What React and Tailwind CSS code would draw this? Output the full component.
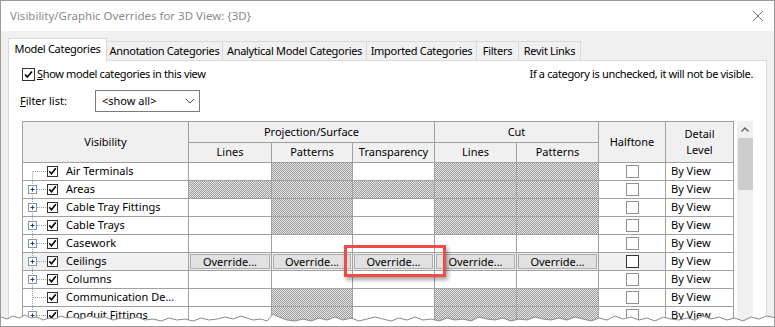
import React from "react";

const H = "h";
const W = "w";

const rows = [
  { name: "Air Terminals", plus: false, first: true, cells: [W, H, W, H, H] },
  { name: "Areas", plus: true, cells: [H, H, H, H, H] },
  { name: "Cable Tray Fittings", plus: true, cells: [W, H, W, H, H] },
  { name: "Cable Trays", plus: true, cells: [W, H, W, H, H] },
  { name: "Casework", plus: true, cells: [W, W, W, W, W] },
  { name: "Ceilings", plus: true, override: true },
  { name: "Columns", plus: true, cells: [W, W, W, W, W] },
  { name: "Communication De...", plus: false, cells: [W, H, W, H, H] },
  { name: "Conduit Fittings", plus: true, cells: [W, H, W, H, H] },
];

const tabs = [
  { label: "Annotation Categories", w: "w-[117px]" },
  { label: "Analytical Model Categories", w: "w-[145px]" },
  { label: "Imported Categories", w: "w-[111px]" },
  { label: "Filters", w: "w-[43px]" },
  { label: "Revit Links", w: "w-[63px]" },
];

const tear = [
  [0, 9], [6, 11], [12, 8], [18, 10], [24, 7], [30, 10], [36, 9], [42, 12], [48, 10], [54, 11],
  [60, 8], [66, 10], [72, 9], [80, 11], [88, 8], [96, 10], [104, 9], [112, 12], [120, 10], [128, 11],
  [136, 9], [144, 12], [152, 11], [160, 13], [168, 10], [176, 12], [184, 11], [192, 13], [200, 10],
  [208, 12], [216, 11], [224, 9], [232, 11], [240, 8], [246, 10], [252, 12], [260, 11], [266, 13],
  [272, 6], [278, 9], [286, 12], [294, 13], [302, 11], [310, 13], [318, 10], [326, 12], [334, 9],
  [342, 12], [350, 10], [358, 13], [366, 11], [374, 9], [382, 11], [390, 13], [398, 10], [406, 12],
  [414, 9], [422, 12], [430, 11], [438, 13], [446, 10], [454, 12], [462, 11], [470, 13], [478, 9],
  [486, 11], [494, 12], [502, 10], [510, 13], [518, 11], [526, 12], [534, 9], [542, 11], [550, 12],
  [558, 10], [566, 12], [574, 9], [582, 11], [590, 13], [598, 10], [606, 12], [614, 8], [622, 11],
  [630, 9], [638, 12], [646, 10], [654, 13], [662, 9], [670, 11], [678, 12], [686, 10], [694, 12],
  [702, 8], [710, 11], [718, 9], [726, 12], [734, 10], [742, 13], [750, 9], [758, 11], [766, 8], [775, 10],
];

const cell = "border-r border-b border-[#a0a0a0]";
const hatch =
  "bg-[repeating-conic-gradient(#9a9a9a_0%_25%,#e8e8e8_0%_50%)] bg-[length:2px_2px]";

function Check({ className = "" }) {
  return (
    <svg width="13" height="13" viewBox="0 0 13 13" className={className}>
      <rect x="0.5" y="0.5" width="12" height="12" fill="#fff" stroke="#333" />
      <path d="M3 6.5 L5.3 9 L10 3.5" fill="none" stroke="#000" strokeWidth="1.7" />
    </svg>
  );
}

function Tree({ plus, first }) {
  return (
    <svg width="40" height="17" viewBox="0 0 40 17" className="shrink-0">
      <path
        d={first ? "M9.5 8.5 V17" : "M9.5 0 V17"}
        stroke="#a0a0a0"
        strokeDasharray="1 1"
      />
      <path d="M10 8.5 H23" stroke="#a0a0a0" strokeDasharray="1 1" />
      {plus && (
        <g>
          <rect x="5.5" y="4.5" width="8" height="8" fill="#fff" stroke="#8795b0" />
          <path d="M7.5 8.5 H11.5 M9.5 6.5 V10.5" stroke="#1c3c8c" />
        </g>
      )}
      <rect x="24.5" y="3.5" width="10" height="10" fill="#fff" stroke="#333" />
      <path d="M26.3 8.3 L28.5 10.7 L32.8 5.3" fill="none" stroke="#000" strokeWidth="1.6" />
    </svg>
  );
}

function Override() {
  return (
    <div className={`${cell} bg-[#f0f0f0] h-[18px] p-px`}>
      <button className="w-full h-full bg-[#e1e1e1] border border-[#adadad] text-[11px] leading-none text-black flex items-center justify-center">
        Override...
      </button>
    </div>
  );
}

export default function App() {
  return (
    <div className="w-[775px] h-[327px] relative overflow-hidden bg-[#f0f0f0] border border-[#9a9a9a] font-['Noto_Sans',sans-serif] text-black">
      {/* title bar */}
      <div className="h-[30px] bg-white flex items-center justify-between pl-[9px] pr-[10px]">
        <span className="text-[11.5px] text-[#8a8a8a]">Visibility/Graphic Overrides for 3D View: {"{3D}"}</span>
        <svg width="12" height="12" viewBox="0 0 12 12">
          <path d="M1 1 L11 11 M11 1 L1 11" stroke="#777" strokeWidth="1" />
        </svg>
      </div>

      {/* tabs */}
      <div className="flex items-end pl-[7px] h-[29px] text-[11px] tracking-[-0.3px] whitespace-nowrap">
        <div className="w-[99px] h-[23px] bg-white border border-b-0 border-[#d9d9d9] -mb-px relative z-10 flex items-center justify-center pb-[2px]">
          Model Categories
        </div>
        {tabs.map((t) => (
          <div
            key={t.label}
            className={`${t.w} h-[19px] -ml-px border border-b-0 border-[#d9d9d9] flex items-center justify-center`}
          >
            {t.label}
          </div>
        ))}
      </div>

      {/* panel */}
      <div className="ml-[7px] w-[759px] h-[300px] bg-white border border-[#d9d9d9] pt-[7px] px-[13px] text-[11px]">
        <div className="flex items-center justify-between h-[13px] tracking-[-0.35px]">
          <div className="flex items-center">
            <Check />
            <span className="ml-[2px]">
              <span className="underline">S</span>how model categories in this view
            </span>
          </div>
          <span>If a category is unchecked, it will not be visible.</span>
        </div>

        <div className="flex items-center mt-[9px] h-[22px]">
          <span className="w-[75px] -ml-[2px]">
            <span className="underline">F</span>ilter list:
          </span>
          <div className="w-[105px] h-[22px] border border-[#7a7a7a] flex items-center justify-between pl-[6px] pr-[4px]">
            <span>&lt;show all&gt;</span>
            <svg width="10" height="6" viewBox="0 0 10 6">
              <path d="M1 1 L5 5 L9 1" fill="none" stroke="#555" />
            </svg>
          </div>
        </div>

        {/* table */}
        <div className="flex mt-[9px]">
          <div className="grid grid-cols-[166px_83px_81px_82px_82px_82px_67px_68px] border-l border-t border-[#a0a0a0] shrink-0">
            <div className={`${cell} row-span-2 bg-[#f0f0f0] flex items-center justify-center`}>Visibility</div>
            <div className={`${cell} col-span-3 h-[21px] bg-[#f0f0f0] flex items-center justify-center`}>Projection/Surface</div>
            <div className={`${cell} col-span-2 h-[21px] bg-[#f0f0f0] flex items-center justify-center`}>Cut</div>
            <div className={`${cell} row-span-2 bg-[#f0f0f0] flex items-center justify-center`}>Halftone</div>
            <div className={`${cell} row-span-2 bg-[#f0f0f0] flex items-center justify-center text-center leading-[16px]`}>
              Detail
              <br />
              Level
            </div>
            {["Lines", "Patterns", "Transparency", "Lines", "Patterns"].map((h, i) => (
              <div key={i} className={`${cell} h-[20px] bg-[#f0f0f0] flex items-center justify-center`}>
                {h}
              </div>
            ))}

            {rows.map((r) => (
              <React.Fragment key={r.name}>
                <div className={`${cell} h-[18px] flex items-center ${r.override ? "bg-[#f0f0f0]" : "bg-white"}`}>
                  <Tree plus={r.plus} first={r.first} />
                  <span className="ml-[3px] whitespace-nowrap">{r.name}</span>
                </div>
                {r.override
                  ? [0, 1, 2, 3, 4].map((i) => <Override key={i} />)
                  : r.cells.map((c, i) => (
                      <div key={i} className={`${cell} h-[18px] ${c === H ? hatch : "bg-white"}`} />
                    ))}
                <div className={`${cell} h-[18px] flex items-center justify-center ${r.override ? "bg-[#f0f0f0]" : "bg-white"}`}>
                  <span
                    className={`w-[13px] h-[13px] bg-white border ${r.override ? "border-[#333]" : "border-[#8f8f8f]"}`}
                  />
                </div>
                <div className={`${cell} h-[18px] flex items-center pl-[5px] bg-white`}>By View</div>
              </React.Fragment>
            ))}
          </div>

          {/* scrollbar */}
          <div className="w-[19px] pl-[3px] bg-white">
            <div className="w-[16px] h-full bg-[#f0f0f0] flex flex-col items-center">
              <div className="h-[17px] flex items-center justify-center">
                <svg width="8" height="5" viewBox="0 0 8 5">
                  <path d="M0.5 4.5 L4 1 L7.5 4.5" fill="none" stroke="#606060" strokeWidth="1.3" />
                </svg>
              </div>
              <div className="w-[15px] h-[52px] bg-[#cdcdcd]" />
            </div>
          </div>
        </div>
      </div>

      {/* highlight box */}
      <div className="absolute left-[343px] top-[244px] w-[102px] h-[32px] border-[3px] border-[#f24b4b] shadow-[2px_3px_4px_rgba(0,0,0,0.35)]" />

      {/* torn edge */}
      <svg className="absolute left-0 top-[307px]" width="775" height="20" viewBox="0 0 775 20">
        <path d={`M0 20 L${tear.map((p) => p.join(" ")).join(" L")} L775 20 Z`} fill="#fff" />
        <polyline points={tear.map((p) => p.join(",")).join(" ")} fill="none" stroke="#8a8a8a" />
      </svg>
    </div>
  );
}
